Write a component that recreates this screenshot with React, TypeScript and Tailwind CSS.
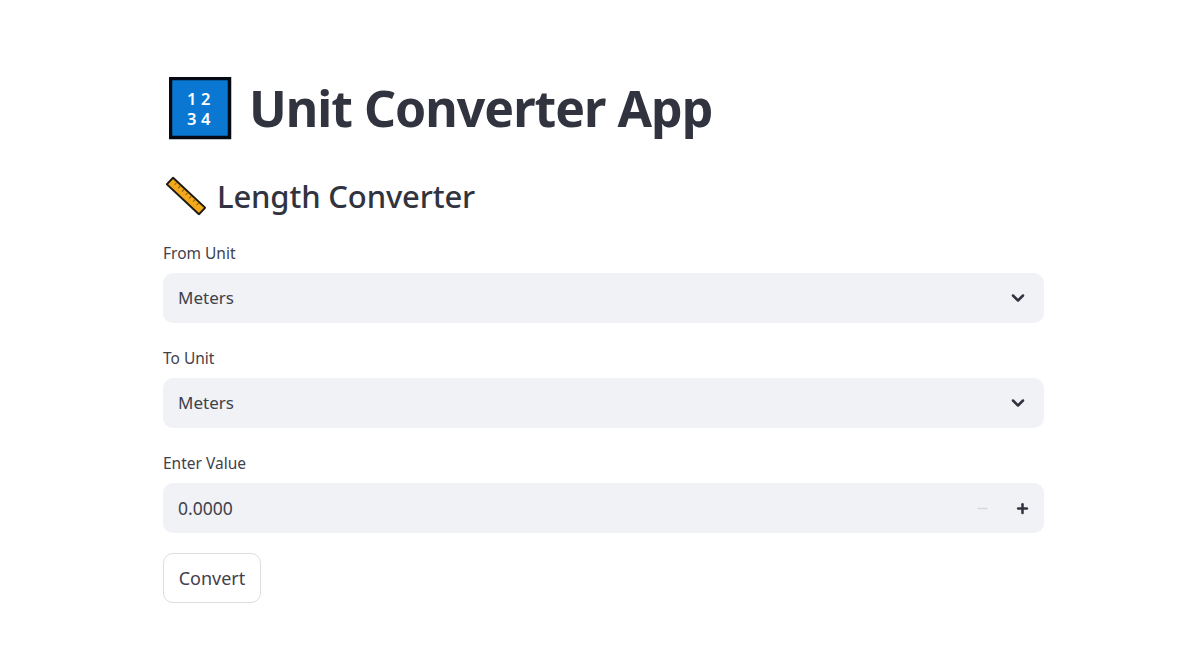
import { ChevronDown, Minus, Plus } from "lucide-react";

function NumbersIcon() {
  return (
    <svg width="63" height="63" viewBox="0 0 63 63" className="shrink-0">
      <rect x="1.5" y="1.5" width="59" height="59" fill="#0a78d2" stroke="#060a14" strokeWidth="3.5" />
      <text x="32" y="28" textAnchor="middle" fontSize="16.5" fontWeight="600" letterSpacing="4.5" fill="#fff" fontFamily="'Noto Sans', sans-serif">12</text>
      <text x="32" y="48" textAnchor="middle" fontSize="16.5" fontWeight="600" letterSpacing="4.5" fill="#fff" fontFamily="'Noto Sans', sans-serif">34</text>
    </svg>
  );
}

function RulerIcon() {
  return (
    <svg width="40" height="40" viewBox="0 0 40 40" className="shrink-0">
      <g transform="rotate(43 20 20)">
        <rect x="-2" y="15.5" width="44" height="9" rx="0.5" fill="#f2a91c" stroke="#1c1a14" strokeWidth="2" />
        <path d="M4 16.5v3M9 16.5v3M14 16.5v3M19 16.5v3M24 16.5v3M29 16.5v3M34 16.5v3" stroke="#8a5a10" strokeWidth="1" />
      </g>
    </svg>
  );
}

function SelectBox({ label }: { label: string }) {
  return (
    <div className="flex flex-col">
      <label className="text-[15.5px] leading-[20px] text-[#3f414c] mb-[10px]">{label}</label>
      <div className="h-[50px] rounded-[10px] bg-[#f0f2f6] flex items-center justify-between pl-[15px] pr-[16px]">
        <span className="text-[17px] text-[#3f414c]">Meters</span>
        <ChevronDown size={20} strokeWidth={3} className="text-[#31333f]" />
      </div>
    </div>
  );
}

export default function App() {
  return (
    <div className="w-[1200px] h-[660px] bg-white overflow-hidden pl-[163px] pr-[156px] pt-[72px] font-['Noto_Sans',sans-serif] text-[#31333f]">
      <h1 className="h-[72px] flex items-center gap-[17px] pl-[6px] text-[50px] font-bold leading-none tracking-[-1px]">
        <NumbersIcon />
        <span>Unit Converter App</span>
      </h1>
      <h2 className="mt-[28px] h-[48px] flex items-center gap-[11px] pl-[3px] text-[31px] font-medium leading-none tracking-[-0.15px]">
        <RulerIcon />
        <span>Length Converter</span>
      </h2>

      <div className="mt-[23px] flex flex-col gap-[25px]">
        <SelectBox label="From Unit" />
        <SelectBox label="To Unit" />
        <div className="flex flex-col">
          <label className="text-[15.5px] leading-[20px] text-[#3f414c] mb-[10px]">Enter Value</label>
          <div className="h-[50px] rounded-[10px] bg-[#f0f2f6] flex items-center justify-between pl-[15px] pr-[14px]">
            <span className="text-[17.5px] text-[#3f414c]">0.0000</span>
            <div className="flex items-center gap-[25px]">
              <Minus size={15} strokeWidth={2.5} className="text-[#d5d7dc]" />
              <Plus size={15} strokeWidth={4} className="text-[#31333f]" />
            </div>
          </div>
        </div>
      </div>

      <button className="mt-[20px] h-[50px] w-[98px] rounded-[10px] border border-[#dcdde1] bg-white text-[18px] text-[#3f414c] flex items-center justify-center">
        Convert
      </button>
    </div>
  );
}
